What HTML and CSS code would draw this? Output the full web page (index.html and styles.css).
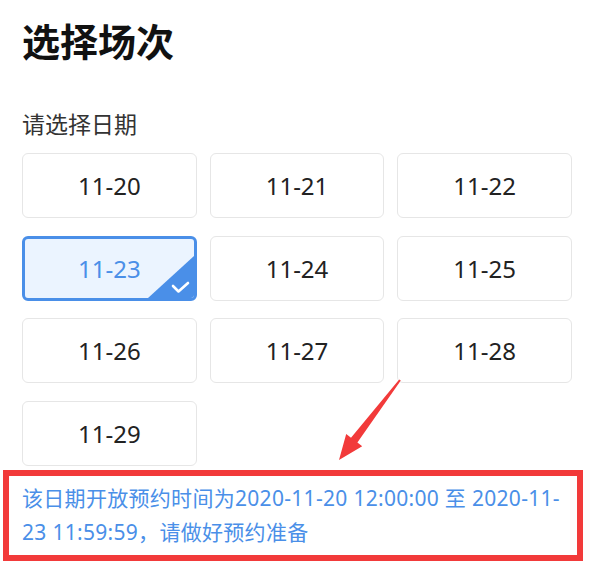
FILE: index.html
```html
<!DOCTYPE html>
<html lang="zh-CN">
<head>
    <meta charset="UTF-8">
    <meta name="viewport" content="width=device-width, initial-scale=1.0">
    <title>选择场次</title>
    <link rel="stylesheet" href="styles.css">
</head>
<body>
    <div class="page">
        <h1 class="page-title">选择场次</h1>
        <p class="section-label">请选择日期</p>

        <div class="date-grid">
            <div class="date-item">11-20</div>
            <div class="date-item">11-21</div>
            <div class="date-item">11-22</div>
            <div class="date-item active">
                11-23
                <svg class="active-mark" width="46" height="42" viewBox="0 0 46 42">
                    <polygon points="46,0 46,42 0,42" fill="#4a8fe8"/>
                    <polyline points="25,30 30.5,35.5 40,27" fill="none" stroke="#fff" stroke-width="2.6" stroke-linecap="round" stroke-linejoin="round"/>
                </svg>
            </div>
            <div class="date-item">11-24</div>
            <div class="date-item">11-25</div>
            <div class="date-item">11-26</div>
            <div class="date-item">11-27</div>
            <div class="date-item">11-28</div>
            <div class="date-item">11-29</div>
        </div>

        <div class="notice">
            该日期开放预约时间为2020-11-20 12:00:00 至 2020-11-23 11:59:59，请做好预约准备
        </div>

        <!-- flèche d'annotation -->
        <svg class="annot-arrow" width="594" height="576" viewBox="0 0 594 576">
            <polygon points="400.8,380.6 357.4,442.5 362.2,446.2 339,460 346.2,434 351,437.7 399.2,379.4" fill="#f23a3a"/>
        </svg>
    </div>
</body>
</html>
```

FILE: styles.css
```css
* {
    margin: 0;
    padding: 0;
    box-sizing: border-box;
}

body {
    font-family: "Noto Sans", "Noto Sans CJK SC", sans-serif;
    background: #fff;
    color: #222;
}

.page {
    position: relative;
    padding: 17px 22px 0;
}

.page-title {
    font-family: "Noto Sans CJK SC", sans-serif;
    font-size: 38px;
    font-weight: 700;
    line-height: 46px;
    color: #111;
}

.section-label {
    font-family: "Noto Sans CJK SC", sans-serif;
    font-size: 23px;
    line-height: 32px;
    margin-top: 44px;
    color: #333;
}

.date-grid {
    display: grid;
    grid-template-columns: repeat(3, 1fr);
    grid-auto-rows: 65px;
    column-gap: 13px;
    row-gap: 17.5px;
    margin-top: 14px;
}

.date-item {
    position: relative;
    display: flex;
    align-items: center;
    justify-content: center;
    border: 1px solid #e6e6e6;
    border-radius: 6px;
    background: #fff;
    font-size: 24px;
    color: #222;
    overflow: hidden;
}

.date-item.active {
    border: 3px solid #4a8fe8;
    background: #ebf4ff;
    color: #4a8fe8;
}

.active-mark {
    position: absolute;
    right: 0;
    bottom: 0;
}

.notice {
    margin: 4.5px -11px 0 -19px;
    border: 6px solid #f23a3a;
    padding: 5px 8px 6px 13px;
    font-size: 21px;
    line-height: 34px;
    letter-spacing: 0.3px;
    color: #4a8fe8;
    word-break: break-all;
}

.annot-arrow {
    position: absolute;
    left: 0;
    top: 0;
    pointer-events: none;
}
```
